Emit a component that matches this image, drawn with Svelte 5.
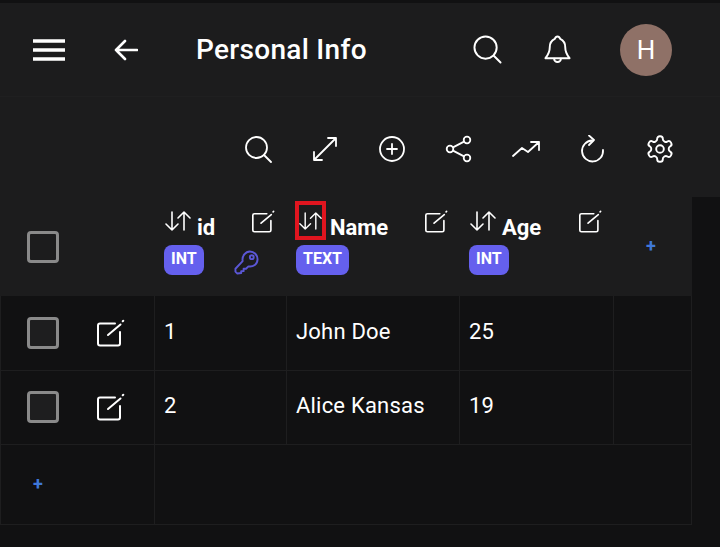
<script>
  const columns = [
    { name: 'id', type: 'INT', key: true },
    { name: 'Name', type: 'TEXT', marked: true },
    { name: 'Age', type: 'INT' }
  ];

  const rows = [
    { id: 1, name: 'John Doe', age: 25 },
    { id: 2, name: 'Alice Kansas', age: 19 }
  ];
</script>

{#snippet sortIcon()}
  <svg class="sort-icon" viewBox="0 0 26 22" fill="none" stroke="currentColor" stroke-width="1.6" stroke-linecap="round" stroke-linejoin="round">
    <path d="M7 2v18M1 14l6 6 6-6" />
    <path d="M19 20V2M13 8l6-6 6 6" />
  </svg>
{/snippet}

{#snippet editIcon(cls)}
  <svg class={cls} viewBox="0 0 28 28" fill="none" stroke="currentColor" stroke-width="2" stroke-linecap="round" stroke-linejoin="round">
    <path d="M18 4.5H3a2 2 0 0 0-2 2v18a2 2 0 0 0 2 2h18a2 2 0 0 0 2-2V13" />
    <path d="M11 16L23.5 5.5" />
    <path d="M25.7 2.3l.6-.6" />
  </svg>
{/snippet}

<div class="page">
  <header class="topbar">
    <button class="menu" aria-label="menu">
      <svg viewBox="0 0 32 22" fill="none" stroke="currentColor" stroke-width="3.4">
        <path d="M0 2h32M0 11h32M0 20h32" />
      </svg>
    </button>
    <button class="back" aria-label="back">
      <svg viewBox="0 0 24 22" fill="none" stroke="currentColor" stroke-width="2.6" stroke-linecap="round" stroke-linejoin="round">
        <path d="M23 11H2M11 2l-9 9 9 9" />
      </svg>
    </button>
    <h1>Personal Info</h1>
    <button class="top-search" aria-label="search">
      <svg viewBox="0 0 30 30" fill="none" stroke="currentColor" stroke-width="2" stroke-linecap="round">
        <circle cx="13" cy="13" r="11.5" />
        <path d="M21.5 21.5l7 7" />
      </svg>
    </button>
    <button class="bell" aria-label="notifications">
      <svg viewBox="0 0 28 30" fill="none" stroke="currentColor" stroke-width="2" stroke-linecap="round" stroke-linejoin="round">
        <path d="M14 1c-1.5 0-2.3 1-2.8 2.5C8 5 6 8 6 12c0 5-1.5 8-4.500 11.500h25C23.500 20 22 17 22 12c0-4-2-7-5.200-8.500C16.300 2 15.500 1 14 1z" />
        <path d="M10.500 24a3.500 3.500 0 0 0 7 0" />
      </svg>
    </button>
    <div class="avatar">H</div>
  </header>

  <div class="toolbar">
    <button aria-label="search">
      <svg viewBox="0 0 28 28" fill="none" stroke="currentColor" stroke-width="1.8" stroke-linecap="round">
        <circle cx="12.5" cy="12.5" r="10.5" />
        <path d="M20 20l7 7" />
      </svg>
    </button>
    <button aria-label="expand">
      <svg viewBox="0 0 28 28" fill="none" stroke="currentColor" stroke-width="1.8" stroke-linecap="round" stroke-linejoin="round">
        <path d="M4 24L24 4M17 3h8v8M3 17v8h8" />
      </svg>
    </button>
    <button aria-label="add">
      <svg viewBox="0 0 28 28" fill="none" stroke="currentColor" stroke-width="1.8" stroke-linecap="round">
        <circle cx="14" cy="14" r="12" />
        <path d="M14 9v10M9 14h10" />
      </svg>
    </button>
    <button aria-label="share">
      <svg viewBox="0 0 28 28" fill="none" stroke="currentColor" stroke-width="1.8">
        <circle cx="5" cy="14" r="3.3" />
        <circle cx="22" cy="5" r="3.3" />
        <circle cx="22" cy="23" r="3.3" />
        <path d="M8 12.4L19 6.6M8 15.6l11 5.8" />
      </svg>
    </button>
    <button aria-label="trends">
      <svg viewBox="0 0 28 28" fill="none" stroke="currentColor" stroke-width="1.8" stroke-linecap="round" stroke-linejoin="round">
        <path d="M1 21l9-8 6 4L27 7M19 7h8v8" />
      </svg>
    </button>
    <button aria-label="refresh">
      <svg viewBox="0 0 28 28" fill="none" stroke="currentColor" stroke-width="1.8" stroke-linecap="round" stroke-linejoin="round">
        <path d="M13 5.5A10.5 10.5 0 1 0 24 15" />
        <path d="M10 0.5l5 4.5-5 5" />
      </svg>
    </button>
    <button aria-label="settings">
      <svg viewBox="1 1 22 22" fill="none" stroke="currentColor" stroke-width="1.5" stroke-linejoin="round">
        <path d="M12.22 2h-.44a2 2 0 0 0-2 2v.18a2 2 0 0 1-1 1.73l-.43.25a2 2 0 0 1-2 0l-.15-.08a2 2 0 0 0-2.73.73l-.22.38a2 2 0 0 0 .73 2.73l.15.1a2 2 0 0 1 1 1.72v.51a2 2 0 0 1-1 1.74l-.15.09a2 2 0 0 0-.73 2.73l.22.38a2 2 0 0 0 2.73.73l.15-.08a2 2 0 0 1 2 0l.43.25a2 2 0 0 1 1 1.73V20a2 2 0 0 0 2 2h.44a2 2 0 0 0 2-2v-.18a2 2 0 0 1 1-1.73l.43-.25a2 2 0 0 1 2 0l.15.08a2 2 0 0 0 2.73-.73l.22-.39a2 2 0 0 0-.73-2.73l-.15-.08a2 2 0 0 1-1-1.74v-.5a2 2 0 0 1 1-1.74l.15-.09a2 2 0 0 0 .73-2.73l-.22-.38a2 2 0 0 0-2.73-.73l-.15.08a2 2 0 0 1-2 0l-.43-.25a2 2 0 0 1-1-1.73V4a2 2 0 0 0-2-2z" />
        <circle cx="12" cy="12" r="3" />
      </svg>
    </button>
  </div>

  <div class="table">
    <div class="row head">
      <div class="cell lead"><span class="checkbox"></span></div>
      {#each columns as col}
        <div class="cell col">
          <div class="col-top">
            <span class="sort" class:marked={col.marked}>{@render sortIcon()}</span>
            <span class="col-name">{col.name}</span>
            {@render editIcon('edit-small')}
          </div>
          <div class="col-bottom">
            <span class="badge">{col.type}</span>
            {#if col.key}
              <svg class="key" viewBox="0 0 26 26" fill="none" stroke="currentColor" stroke-width="2" stroke-linejoin="round">
                <path d="M16.5 1.5a8 8 0 0 1 8 8c0 5-4.5 8.500-9.500 7.500l-2.500 2.500H10v2.500H7.500v2L3.500 24.500l-2-2V19.500L9 11.500c-1-5 3-10 7.500-10z" />
                <circle cx="18.5" cy="7.5" r="2" />
              </svg>
            {/if}
          </div>
        </div>
      {/each}
      <div class="cell add-col"><span class="plus">+</span></div>
    </div>

    {#each rows as row}
      <div class="row body">
        <div class="cell lead">
          <span class="checkbox"></span>
          {@render editIcon('edit-row')}
        </div>
        <div class="cell text">{row.id}</div>
        <div class="cell text">{row.name}</div>
        <div class="cell text">{row.age}</div>
        <div class="cell"></div>
      </div>
    {/each}

    <div class="row foot">
      <div class="cell add-row"><span class="plus">+</span></div>
      <div class="cell rest"></div>
    </div>
  </div>
</div>

<style>
  :global(body) {
    background: #111112;
  }

  .page {
    width: 720px;
    height: 547px;
    overflow: hidden;
    background: #111112;
    color: #fff;
    font-family: Roboto, "Liberation Sans", sans-serif;
    padding-top: 3px;
    box-sizing: border-box;
  }

  button {
    background: none;
    border: none;
    padding: 0;
    color: #fff;
    display: flex;
    align-items: center;
    justify-content: center;
  }

  svg {
    display: block;
  }

  .topbar {
    height: 94px;
    background: #1c1c1d;
    border-bottom: 1px solid #1f1f20;
    display: flex;
    align-items: center;
    box-sizing: border-box;
    padding-left: 33px;
  }

  .menu svg {
    width: 32px;
    height: 22px;
  }

  .menu {
    margin-right: 49px;
  }

  .back svg {
    width: 24px;
    height: 22px;
  }

  h1 {
    margin: 0 0 0 58px;
    width: 277px;
    font-size: 28px;
    font-weight: 500;
    letter-spacing: 0.3px;
    line-height: 30px;
    white-space: nowrap;
  }

  .top-search svg {
    width: 29px;
    height: 29px;
  }

  .bell {
    margin-left: 42px;
  }

  .bell svg {
    width: 27px;
    height: 30px;
  }

  .avatar {
    margin-left: 49px;
    width: 52px;
    height: 52px;
    border-radius: 50%;
    background: #8f7167;
    font-size: 26px;
    display: flex;
    align-items: center;
    justify-content: center;
  }

  .toolbar {
    height: 100px;
    background: #1c1c1d;
    display: flex;
    justify-content: flex-end;
    align-items: center;
    padding: 4px 27px 0 0;
    box-sizing: border-box;
  }

  .toolbar button {
    width: 67px;
    height: 40px;
  }

  .toolbar svg {
    width: 28px;
    height: 28px;
  }

  .table {
    width: 692px;
    border-bottom: 1px solid #1e1e1f;
  }

  .row {
    display: grid;
    grid-template-columns: 155px 132px 173px 154px 78px;
  }

  .cell {
    box-sizing: border-box;
    min-width: 0;
  }

  .head {
    height: 99px;
    background: #1c1c1d;
  }

  .head .lead {
    padding-left: 27px;
    display: flex;
    align-items: center;
  }

  .checkbox {
    width: 32px;
    height: 32px;
    box-sizing: border-box;
    border: 3px solid #8a8a8a;
    border-radius: 4px;
    background: #1c1c1d;
  }

  .col {
    padding: 13px 10px 0;
  }

  .col-top {
    display: flex;
    align-items: flex-start;
    height: 35px;
  }

  .sort {
    position: relative;
    display: block;
    flex: none;
    width: 26px;
    height: 22px;
  }

  .sort-icon {
    width: 26px;
    height: 22px;
  }

  .sort.marked {
    width: 23px;
    margin: 0 2px 0 2px;
  }

  .sort.marked .sort-icon {
    width: 23px;
  }

  .sort.marked::after {
    content: '';
    position: absolute;
    left: -4px;
    right: -4px;
    top: -9px;
    bottom: -8px;
    border: 4px solid #e0151f;
    box-sizing: border-box;
  }

  .col-name {
    margin-left: 6px;
    margin-top: 5px;
    font-size: 22px;
    font-weight: 700;
    line-height: 25px;
  }

  .edit-small {
    margin-left: auto;
    margin-right: 2px;
    width: 23px;
    height: 23px;
  }

  .col-bottom {
    display: flex;
    align-items: flex-start;
    margin-left: -1px;
  }

  .badge {
    height: 30px;
    padding: 0 7px;
    box-sizing: border-box;
    border-radius: 8px;
    background: #6560ee;
    font-size: 16px;
    font-weight: 700;
    line-height: 27px;
  }

  .key {
    margin-left: 30px;
    margin-top: 5px;
    width: 25px;
    height: 25px;
    color: #5b57d6;
  }

  .add-col {
    display: flex;
    align-items: center;
    padding: 0 0 2px 32px;
  }

  .plus {
    color: #3f78d8;
    font-size: 18px;
    font-weight: 700;
    line-height: 20px;
  }

  .body {
    height: 74.5px;
    font-size: 22px;
    letter-spacing: 0.2px;
    border-bottom: 1px solid #1e1e1f;
    box-sizing: border-box;
  }

  .body .cell {
    border-right: 1px solid #1e1e1f;
    display: flex;
    align-items: center;
  }

  .body .text {
    padding: 0 0 3px 9px;
  }

  .body .lead {
    border-left: 1px solid #1e1e1f;
    padding-left: 26px;
  }

  .body .checkbox {
    background: #1e1e1f;
  }

  .edit-row {
    margin-left: 38px;
    width: 28px;
    height: 28px;
  }

  .foot {
    height: 79px;
    grid-template-columns: 155px 1fr;
  }

  .add-row {
    border-left: 1px solid #1e1e1f;
    border-right: 1px solid #1e1e1f;
    padding: 0 0 1px 32px;
    display: flex;
    align-items: center;
  }

  .rest {
    border-right: 1px solid #1e1e1f;
  }
</style>
